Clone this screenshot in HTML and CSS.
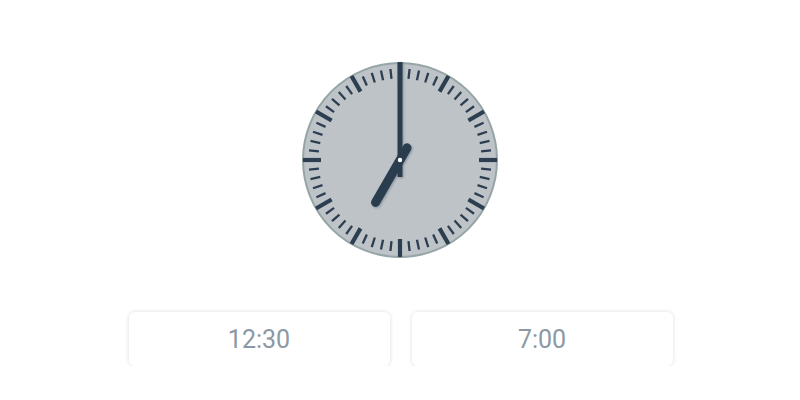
FILE: index.html
```html
<!DOCTYPE html>
<html lang="en">
<head>
<meta charset="utf-8">
<title>Clock</title>
<link rel="stylesheet" href="styles.css">
</head>
<body>
<main class="page">
  <svg class="clock" width="200" height="200" viewBox="0 0 200 200">
    <defs>
      <g id="quint">
        <line class="tick-hour" x1="100" y1="3" x2="100" y2="21"/>
        <line class="tick-min" x1="100" y1="8.5" x2="100" y2="18.5" transform="rotate(6 100 100)"/>
        <line class="tick-min" x1="100" y1="8.5" x2="100" y2="18.5" transform="rotate(12 100 100)"/>
        <line class="tick-min" x1="100" y1="8.5" x2="100" y2="18.5" transform="rotate(18 100 100)"/>
        <line class="tick-min" x1="100" y1="8.5" x2="100" y2="18.5" transform="rotate(24 100 100)"/>
      </g>
      <filter id="sh" x="-50%" y="-50%" width="200%" height="200%">
        <feDropShadow dx="1" dy="1" stdDeviation="0.8" flood-color="#2c3e50" flood-opacity="0.35"/>
      </filter>
    </defs>
    <circle class="face" cx="100" cy="100" r="97"/>
    <g class="ticks">
      <use href="#quint"/>
      <use href="#quint" transform="rotate(30 100 100)"/>
      <use href="#quint" transform="rotate(60 100 100)"/>
      <use href="#quint" transform="rotate(90 100 100)"/>
      <use href="#quint" transform="rotate(120 100 100)"/>
      <use href="#quint" transform="rotate(150 100 100)"/>
      <use href="#quint" transform="rotate(180 100 100)"/>
      <use href="#quint" transform="rotate(210 100 100)"/>
      <use href="#quint" transform="rotate(240 100 100)"/>
      <use href="#quint" transform="rotate(270 100 100)"/>
      <use href="#quint" transform="rotate(300 100 100)"/>
      <use href="#quint" transform="rotate(330 100 100)"/>
    </g>
    <g filter="url(#sh)">
      <line class="hand-min" x1="100" y1="117" x2="100" y2="2"/>
      <line class="hand-hour" x1="100" y1="114" x2="100" y2="51" transform="rotate(210 100 100)"/>
    </g>
    <circle class="pin" cx="100" cy="100" r="2.2"/>
  </svg>
  <div class="answers">
    <button class="answer" type="button">12:30</button>
    <button class="answer" type="button">7:00</button>
  </div>
</main>
</body>
</html>
```

FILE: styles.css
```css
html, body {
  margin: 0;
  padding: 0;
  background: #ffffff;
}

.page {
  display: flex;
  flex-direction: column;
  align-items: center;
  padding-top: 60px;
  font-family: Roboto, "Liberation Sans", sans-serif;
}

.clock {
  display: block;
}

.face {
  fill: #bdc3c7;
  stroke: #95a5a6;
  stroke-width: 2;
}

.tick-hour {
  stroke: #2c3e50;
  stroke-width: 4.2;
}

.tick-min {
  stroke: #2c3e50;
  stroke-width: 2.3;
}

.hand-min {
  stroke: #2c3e50;
  stroke-width: 5;
}

.hand-hour {
  stroke: #2c3e50;
  stroke-width: 9;
  stroke-linecap: round;
}

.pin {
  fill: #ffffff;
}

.answers {
  display: flex;
  gap: 22px;
  margin-top: 52px;
  margin-left: 1px;
}

.answer {
  width: 261px;
  height: 54px;
  border: none;
  border-radius: 6px;
  background: #ffffff;
  box-shadow: 0 0 4px rgba(0, 0, 0, 0.14);
  font-family: Roboto, "Liberation Sans", sans-serif;
  font-size: 25px;
  font-weight: 400;
  color: #8c98a4;
  padding: 0;
  cursor: pointer;
}
```
